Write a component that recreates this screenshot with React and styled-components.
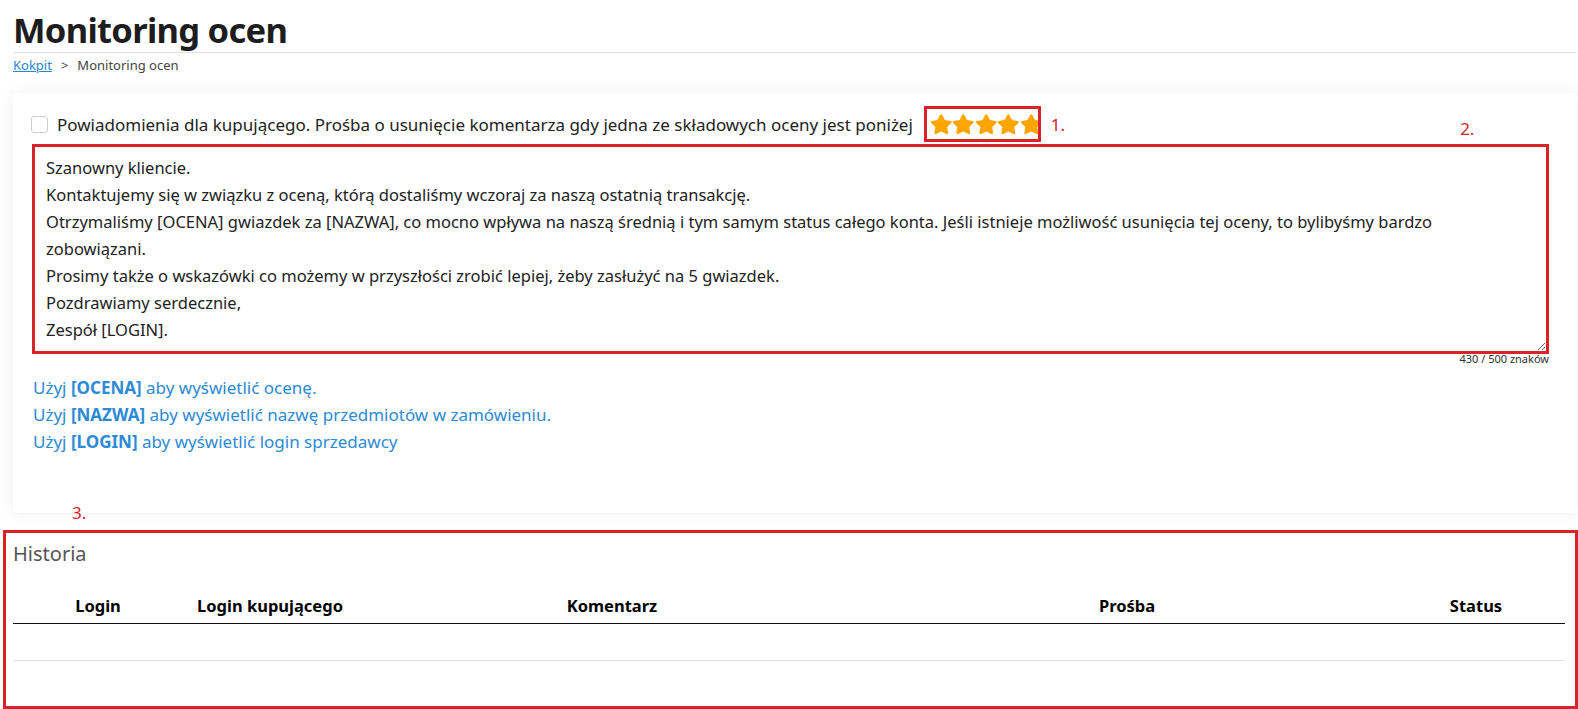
import React from "react"
import styled, { createGlobalStyle } from "styled-components"
import { FaStar } from "react-icons/fa"

const GlobalStyle = createGlobalStyle`
  * { box-sizing: border-box; }
  html, body { overflow: hidden; }
  body {
    margin: 0;
    background: #fff;
    font-family: "Noto Sans", "Open Sans", sans-serif;
    color: #222;
  }
`

const Page = styled.div`
  padding: 0 1px 0 13px;
`

const Title = styled.h1`
  margin: 0;
  padding-top: 7px;
  font-size: 34.5px;
  letter-spacing: -0.7px;
  line-height: 45px;
  font-weight: 700;
  color: #1d1d1f;
  border-bottom: 1px solid #e2e2e2;
`

const Breadcrumb = styled.div`
  display: flex;
  gap: 9px;
  align-items: center;
  font-size: 13px;
  line-height: 24px;
  color: #444;
  a {
    color: #2a85d0;
    text-decoration: underline;
  }
`

const Card = styled.section`
  margin-top: 16px;
  background: #fff;
  box-shadow: 0 0 14px rgba(0, 0, 0, 0.07);
  padding: 14px 28px 58px 19px;
`

const NotifyRow = styled.div`
  display: flex;
  align-items: center;
  height: 34px;
`

const Check = styled.span`
  width: 17px;
  height: 17px;
  border: 1px solid #cfcfcf;
  border-radius: 3px;
  margin: 0 9px 0 -1px;
  flex: none;
`

const Label = styled.span`
  font-size: 17px;
  color: #222;
  white-space: nowrap;
`

const StarsBox = styled.div`
  display: flex;
  align-items: center;
  margin-left: 11px;
  width: 117px;
  height: 36px;
  padding-left: 3px;
  border: 3px solid #d9232a;
  overflow: hidden;
  color: #ffa500;
  svg {
    flex: none;
    width: 22.5px;
    height: 22.5px;
  }
`

const Mark = styled.span`
  color: #d9232a;
  font-size: 17px;
  margin-left: ${p => p.$left || 0}px;
  margin-top: ${p => p.$top || 0}px;
`

const Message = styled.textarea`
  display: block;
  width: 100%;
  height: 210px;
  margin-top: 3px;
  padding: 7px 11px 4px;
  border: 3px solid #d9232a;
  font-family: "Noto Sans", "Open Sans", sans-serif;
  font-size: 16.5px;
  line-height: 27px;
  color: #222;
  resize: vertical;
  outline: none;
`

const Counter = styled.div`
  margin-top: -2px;
  text-align: right;
  font-size: 11px;
  line-height: 14px;
  color: #333;
`

const Hints = styled.div`
  margin: 8px 0 0 1px;
  font-size: 17px;
  line-height: 27px;
  color: #2d8ad4;
  b {
    font-weight: 700;
  }
`

const Three = styled.div`
  margin: -7px 0 0 59px;
  height: 24px;
  color: #d9232a;
  font-size: 17px;
  line-height: 14px;
`

const History = styled.section`
  margin: 0 -1px 0 -10px;
  border: 3px solid #d9232a;
  padding: 6px 7px 45px 7px;
`

const HistoryTitle = styled.h2`
  margin: 0;
  font-size: 20px;
  font-weight: 400;
  line-height: 30px;
  color: #555;
`

const Table = styled.table`
  width: calc(100% - 3px);
  border-collapse: collapse;
  margin-top: 25px;
  table-layout: fixed;
`

const Th = styled.th`
  width: ${p => p.$w ? p.$w + "px" : "auto"};
  text-align: center;
  font-size: 16.5px;
  font-weight: 700;
  color: #000;
  padding: 0 0 6px;
  border-bottom: 1px solid #111;
`

const Td = styled.td`
  height: 37px;
  border-bottom: 1px solid #e2e2e2;
`

const text = `Szanowny kliencie.
Kontaktujemy się w związku z oceną, którą dostaliśmy wczoraj za naszą ostatnią transakcję.
Otrzymaliśmy [OCENA] gwiazdek za [NAZWA], co mocno wpływa na naszą średnią i tym samym status całego konta. Jeśli istnieje możliwość usunięcia tej oceny, to bylibyśmy bardzo zobowiązani.
Prosimy także o wskazówki co możemy w przyszłości zrobić lepiej, żeby zasłużyć na 5 gwiazdek.
Pozdrawiamy serdecznie,
Zespół [LOGIN].`

const columns = [
  { name: "Login", w: 170 },
  { name: "Login kupującego", w: 174 },
  { name: "Komentarz", w: 510 },
  { name: "Prośba", w: 520 },
  { name: "Status" },
]

export default function App() {
  return (
    <Page>
      <GlobalStyle />
      <Title>Monitoring ocen</Title>
      <Breadcrumb>
        <a href="#">Kokpit</a>
        <span>&gt;</span>
        <span>Monitoring ocen</span>
      </Breadcrumb>

      <Card>
        <NotifyRow>
          <Check />
          <Label>
            Powiadomienia dla kupującego. Prośba o usunięcie komentarza gdy jedna ze składowych oceny jest poniżej
          </Label>
          <StarsBox>
            {[0, 1, 2, 3, 4].map(i => <FaStar key={i} />)}
          </StarsBox>
          <Mark $left={10}>1.</Mark>
          <Mark $left={395} $top={8}>2.</Mark>
        </NotifyRow>
        <Message defaultValue={text} />
        <Counter>430 / 500 znaków</Counter>
        <Hints>
          <div>Użyj <b>[OCENA]</b> aby wyświetlić ocenę.</div>
          <div>Użyj <b>[NAZWA]</b> aby wyświetlić nazwę przedmiotów w zamówieniu.</div>
          <div>Użyj <b>[LOGIN]</b> aby wyświetlić login sprzedawcy</div>
        </Hints>
      </Card>

      <Three>3.</Three>
      <History>
        <HistoryTitle>Historia</HistoryTitle>
        <Table>
          <thead>
            <tr>
              {columns.map(c => <Th key={c.name} $w={c.w}>{c.name}</Th>)}
            </tr>
          </thead>
          <tbody>
            <tr>
              <Td colSpan={5} />
            </tr>
          </tbody>
        </Table>
      </History>
    </Page>
  )
}
